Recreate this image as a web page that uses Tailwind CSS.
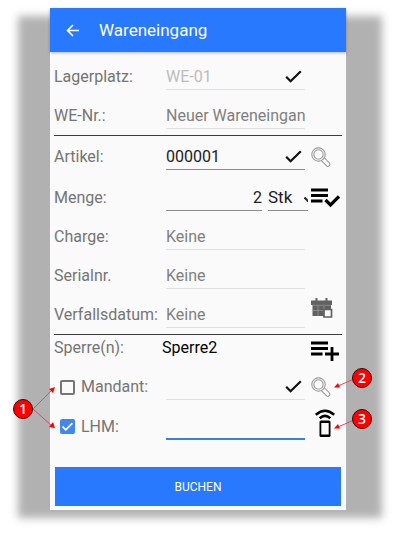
<!DOCTYPE html>
<html lang="de">
<head>
<meta charset="utf-8">
<meta name="viewport" content="width=device-width, initial-scale=1">
<title>Wareneingang</title>
<script src="https://cdn.jsdelivr.net/npm/@tailwindcss/browser@4"></script>
</head>
<body class="min-h-screen bg-white font-[Roboto,sans-serif] text-base text-[#757575]">
<svg class="hidden" aria-hidden="true">
  <symbol id="check" viewBox="0 0 17 13"><path d="M1.2 6.8 5.6 11.2 15.8 1.3" fill="none" stroke="#111" stroke-width="2.2"/></symbol>
  <symbol id="search" viewBox="0 0 20 20">
    <path d="m11.8 12.2 5 5" stroke="#8e8e8e" stroke-width="5" stroke-linecap="round"/>
    <path d="m11.8 12.2 5 5" stroke="#fafafa" stroke-width="3.2" stroke-linecap="round"/>
    <circle cx="7.5" cy="7.5" r="5.7" fill="#fafafa" stroke="#8e8e8e" stroke-width="3"/>
    <circle cx="7.5" cy="7.5" r="5.7" fill="none" stroke="#e8e8e8" stroke-width="1.3"/>
  </symbol>
</svg>
<div class="pt-2 pr-[54px] pb-6 pl-[50px]">
  <div class="relative">
    <div class="absolute top-2 -right-9 -bottom-2 -left-8 bg-[#b1b1b1] blur-[4px]"></div>
    <main class="relative bg-[#fafafa] pb-1">
      <header class="flex h-11 items-center bg-[#2979ff] pl-4 text-white shadow-[0_1px_3px_#0004]">
        <button type="button" aria-label="Zurück" class="mr-5 w-[13px]">
          <svg class="block h-[13px] w-[13px]" viewBox="0 0 13 13"><path d="M13 6.5H1.5M7 1 1.5 6.5 7 12" fill="none" stroke="#fff" stroke-width="1.6"/></svg>
        </button>
        <h1 class="text-[17px] leading-6">Wareneingang</h1>
      </header>

      <form class="px-1">
        <div class="flex flex-col gap-[13px] pt-3 pb-1.5">
          <div class="flex h-[26px] items-center">
            <label for="platz" class="w-28 shrink-0">Lagerplatz:</label>
            <div class="flex h-full min-w-0 flex-1 items-center border-b border-[#e0e0e0] pr-[3px]">
              <input id="platz" value="WE-01" disabled class="min-w-0 flex-1 text-[#bdbdbd]">
              <svg class="h-[13px] w-[17px]"><use href="#check"/></svg>
            </div>
            <div class="w-[37px] shrink-0"></div>
          </div>
          <div class="flex h-[26px] items-center">
            <label for="nr" class="w-28 shrink-0">WE-Nr.:</label>
            <input id="nr" placeholder="Neuer Wareneingang" class="h-full min-w-0 flex-1 border-b border-[#e0e0e0] placeholder:text-[#808080]">
            <div class="w-[37px] shrink-0"></div>
          </div>
        </div>
        <hr class="border-[#3c3c3c]">

        <div class="flex flex-col gap-[13px] pt-2 pb-1.5">
          <div class="mb-0.5 flex h-[26px] items-center">
            <label for="artikel" class="w-28 shrink-0">Artikel:</label>
            <div class="flex h-full min-w-0 flex-1 items-center border-b border-[#8a8a8a] pr-[3px]">
              <input id="artikel" value="000001" class="min-w-0 flex-1 text-[#212121]">
              <svg class="h-[13px] w-[17px]"><use href="#check"/></svg>
            </div>
            <button type="button" aria-label="Artikel suchen" class="w-[37px] shrink-0 pl-1.5"><svg class="block h-5 w-5"><use href="#search"/></svg></button>
          </div>
          <div class="flex h-[26px] items-center">
            <label for="menge" class="w-28 shrink-0">Menge:</label>
            <input id="menge" value="2" class="mr-1.5 h-full min-w-0 flex-1 border-b border-[#8a8a8a] text-right text-[#212121]">
            <div class="relative h-full w-10 shrink-0 overflow-hidden">
              <select aria-label="Einheit" class="h-full w-full appearance-none border-b border-[#8a8a8a] text-[17px] text-[#212121]"><option>Stk</option></select>
              <svg class="pointer-events-none absolute top-3 right-0 h-[5px] w-1" viewBox="0 0 4 5"><path d="M.5.5 5 5" stroke="#222" stroke-width="2.2"/></svg>
            </div>
            <button type="button" aria-label="Menge bestätigen" class="w-[34px] shrink-0 pl-[3px]">
              <svg class="block h-5 w-[29px]" viewBox="0 0 29 20"><path d="M0 2h17M0 7.500h17M0 13h11.500" stroke="#000" stroke-width="2.8"/><path d="m14.500 12 5 5 8.500-8.500" fill="none" stroke="#000" stroke-width="3.2"/></svg>
            </button>
          </div>
          <div class="flex h-[26px] items-center">
            <label for="charge" class="w-28 shrink-0">Charge:</label>
            <input id="charge" placeholder="Keine" class="h-full min-w-0 flex-1 border-b border-[#e0e0e0] placeholder:text-[#808080]">
            <div class="w-[37px] shrink-0"></div>
          </div>
          <div class="flex h-[26px] items-center">
            <label for="serial" class="w-28 shrink-0">Serialnr.</label>
            <input id="serial" placeholder="Keine" class="h-full min-w-0 flex-1 border-b border-[#e0e0e0] placeholder:text-[#808080]">
            <div class="w-[37px] shrink-0"></div>
          </div>
          <div class="flex h-[26px] items-center">
            <label for="verfall" class="w-28 shrink-0">Verfallsdatum:</label>
            <input id="verfall" placeholder="Keine" class="h-full min-w-0 flex-1 border-b border-[#e0e0e0] placeholder:text-[#808080]">
            <button type="button" aria-label="Datum wählen" class="w-[37px] shrink-0 self-start pl-1.5">
              <svg class="-mt-1 block h-5 w-[22px]" viewBox="0 0 22 20">
                <path d="M0 2.500h21v4.500H0zM4.500 0h2v3h-2zM14.500 0h2v3h-2zM1.500 7h18.500v11H1.500z" fill="#616161"/>
                <path d="M1 7.300h19M7 8v10M13 8v10M1.500 12.500h12" stroke="#a5a5a5" stroke-width=".6"/>
                <path d="M13 11.500h7.500v7.500h-7.500z" fill="#fafafa" stroke="#616161" stroke-width="1.700"/>
              </svg>
            </button>
          </div>
        </div>
        <hr class="border-[#3c3c3c]">

        <div class="flex h-[26px] items-center">
          <span class="w-[108px] shrink-0">Sperre(n):</span>
          <output class="flex-1 text-black">Sperre2</output>
          <button type="button" aria-label="Sperre hinzufügen" class="w-[37px] shrink-0 self-end pl-1.5">
            <svg class="block h-5 w-[29px]" viewBox="0 0 29 20"><path d="M0 2h17M0 7.500h17M0 13h11.500M14 13h14M21 6v14" stroke="#000" stroke-width="2.800"/></svg>
          </button>
        </div>

        <div class="flex flex-col gap-[13px] pt-[13px]">
          <div class="flex h-[26px] items-center">
            <label class="flex w-28 shrink-0 items-center gap-1.5 pl-1.5">
              <input type="checkbox" class="size-[15px] appearance-none rounded-[2px] border-2 border-[#757575]">Mandant:
            </label>
            <div class="flex h-full min-w-0 flex-1 items-center border-b border-[#e0e0e0] pr-[3px]">
              <input aria-label="Mandant" class="min-w-0 flex-1">
              <svg class="h-[13px] w-[17px]"><use href="#check"/></svg>
            </div>
            <button type="button" aria-label="Mandant suchen" class="w-[37px] shrink-0 pl-1.5"><svg class="block h-5 w-5"><use href="#search"/></svg></button>
          </div>
          <div class="flex h-[27px] items-center">
            <label class="flex w-28 shrink-0 items-center gap-1.5 pl-1.5">
              <span class="relative flex">
                <input type="checkbox" checked class="size-[15px] appearance-none rounded-[2px] bg-[#4285f4]">
                <svg class="pointer-events-none absolute inset-0 size-[15px]" viewBox="0 0 15 15"><path d="m2.500 7.500 3.300 3.300 6.700-6.700" fill="none" stroke="#fff" stroke-width="1.800"/></svg>
              </span>LHM:
            </label>
            <input aria-label="LHM" class="h-full min-w-0 flex-1 border-b-2 border-[#2f86d6]">
            <button type="button" aria-label="LHM scannen" class="w-[37px] shrink-0 self-start pl-2.5">
              <svg class="-mt-1 block h-7 w-5" viewBox="0 0 20 28">
                <path d="M.8 5.700Q10-2.200 19.200 5.700M4.700 9.200Q10 4.700 15.300 9.200" fill="none" stroke="#000" stroke-width="2.600"/>
                <rect x="4.500" y="11.500" width="11" height="16.500" rx="1.500" fill="#000"/><path d="M6.300 14h7.400v11.500H6.300z" fill="#fafafa"/>
              </svg>
            </button>
          </div>
        </div>

        <div class="px-px pt-[27px]">
          <button type="submit" class="h-[39px] w-full bg-[#2979ff] text-xs text-white">BUCHEN</button>
        </div>
      </form>
    </main>

    <div class="pointer-events-none absolute bottom-[73px] -left-[37px] h-[58px] w-[42px] font-['Open_Sans',sans-serif]">
      <svg class="absolute inset-0 h-full w-full" viewBox="0 0 42 58"><path d="m20 30 18-18M20 30l18 16" stroke="#e8475a" stroke-width="1"/><path d="m42 8-2 6-4-4zM42 49l-6-1 4-5z" fill="#f00"/></svg>
      <span class="absolute top-5 left-0 flex size-5 items-center justify-center rounded-full border border-[#400] bg-[#f00] text-sm font-semibold text-white">1</span>
    </div>
    <div class="pointer-events-none absolute -right-[26px] bottom-[122px] h-5 w-[38px] font-['Open_Sans',sans-serif]">
      <svg class="absolute inset-0 h-full w-full" viewBox="0 0 38 20"><path d="M20 11 4 18" stroke="#e8475a" stroke-width="1"/><path d="m0 19.500 4-4.500 2 4.500z" fill="#f00"/></svg>
      <span class="absolute top-0 right-0 flex size-5 items-center justify-center rounded-full border border-[#400] bg-[#f00] text-sm font-semibold text-white">2</span>
    </div>
    <div class="pointer-events-none absolute -right-[26px] bottom-[81px] h-5 w-[38px] font-['Open_Sans',sans-serif]">
      <svg class="absolute inset-0 h-full w-full" viewBox="0 0 38 20"><path d="M20 11 4 18" stroke="#e8475a" stroke-width="1"/><path d="m0 19.500 4-4.500 2 4.500z" fill="#f00"/></svg>
      <span class="absolute top-0 right-0 flex size-5 items-center justify-center rounded-full border border-[#400] bg-[#f00] text-sm font-semibold text-white">3</span>
    </div>
  </div>
</div>
</body>
</html>
